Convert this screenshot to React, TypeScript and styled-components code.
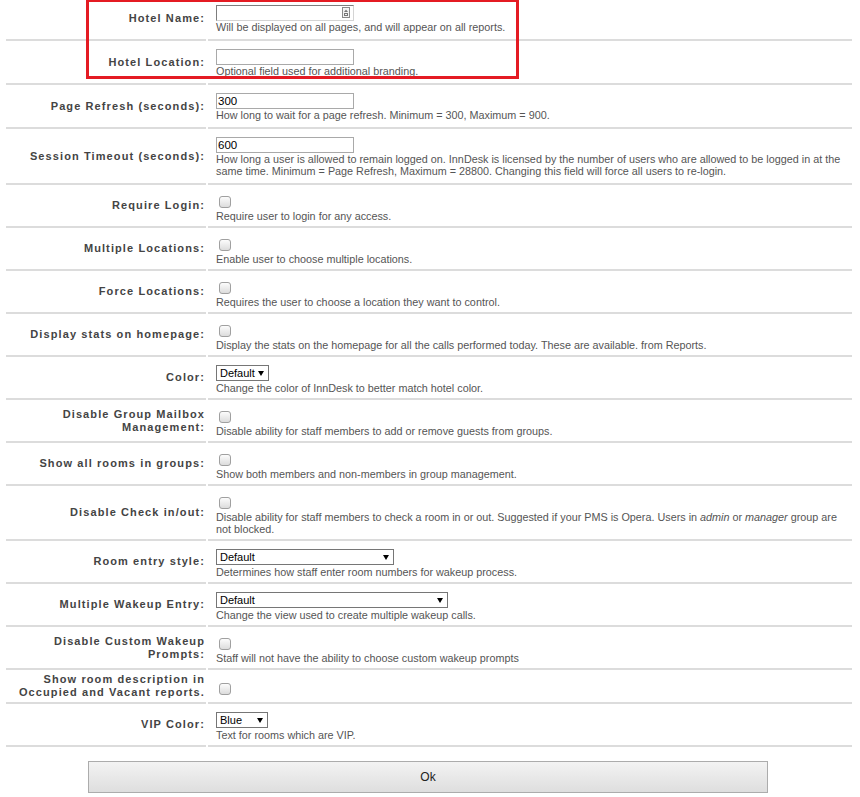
import React from 'react'
import styled, { createGlobalStyle } from 'styled-components'

type Kind = 'text' | 'check' | 'select'

interface Setting {
  label: string;
  kind: Kind;
  value?: string;
  width?: number;
  icon?: boolean;
  desc?: React.ReactNode;
}

const settings: Setting[] = [
  { label: 'Hotel Name:', kind: 'text', icon: true, desc: 'Will be displayed on all pages, and will appear on all reports.' },
  { label: 'Hotel Location:', kind: 'text', desc: 'Optional field used for additional branding.' },
  { label: 'Page Refresh (seconds):', kind: 'text', value: '300', desc: 'How long to wait for a page refresh. Minimum = 300, Maximum = 900.' },
  {
    label: 'Session Timeout (seconds):', kind: 'text', value: '600',
    desc: 'How long a user is allowed to remain logged on. InnDesk is licensed by the number of users who are allowed to be logged in at the same time. Minimum = Page Refresh, Maximum = 28800. Changing this field will force all users to re-login.'
  },
  { label: 'Require Login:', kind: 'check', desc: 'Require user to login for any access.' },
  { label: 'Multiple Locations:', kind: 'check', desc: 'Enable user to choose multiple locations.' },
  { label: 'Force Locations:', kind: 'check', desc: 'Requires the user to choose a location they want to control.' },
  { label: 'Display stats on homepage:', kind: 'check', desc: 'Display the stats on the homepage for all the calls performed today. These are available. from Reports.' },
  { label: 'Color:', kind: 'select', value: 'Default', width: 53, desc: 'Change the color of InnDesk to better match hotel color.' },
  { label: 'Disable Group Mailbox Management:', kind: 'check', desc: 'Disable ability for staff members to add or remove guests from groups.' },
  { label: 'Show all rooms in groups:', kind: 'check', desc: 'Show both members and non-members in group management.' },
  {
    label: 'Disable Check in/out:', kind: 'check',
    desc: <>Disable ability for staff members to check a room in or out. Suggested if your PMS is Opera. Users in <i>admin</i> or <i>manager</i> group are not blocked.</>
  },
  { label: 'Room entry style:', kind: 'select', value: 'Default', width: 178, desc: 'Determines how staff enter room numbers for wakeup process.' },
  { label: 'Multiple Wakeup Entry:', kind: 'select', value: 'Default', width: 232, desc: 'Change the view used to create multiple wakeup calls.' },
  { label: 'Disable Custom Wakeup Prompts:', kind: 'check', desc: 'Staff will not have the ability to choose custom wakeup prompts' },
  { label: 'Show room description in Occupied and Vacant reports.', kind: 'check' },
  { label: 'VIP Color:', kind: 'select', value: 'Blue', width: 52, desc: 'Text for rooms which are VIP.' },
]

const App = () => {
  return (
    <Page>
      <GlobalStyle />
      <Form>
        {settings.map((s) => (
          <Row key={s.label}>
            <Label>{s.label}</Label>
            <Value $kind={s.kind}>
              {s.kind === 'text' && (
                <Field>
                  <TextInput type="text" defaultValue={s.value ?? ''} $inset={!!s.icon} />
                  {s.icon && (
                    <KeyIcon width="8" height="11" viewBox="0 0 8 11">
                      <rect x="0.5" y="0.5" width="7" height="10" fill="#f4f4f4" stroke="#8a8a8a" />
                      <path d="M4 2.5 L6 5 L2 5 Z" fill="#777" />
                      <rect x="2.5" y="6.5" width="3" height="2" fill="none" stroke="#777" />
                    </KeyIcon>
                  )}
                </Field>
              )}
              {s.kind === 'check' && <Check type="checkbox" />}
              {s.kind === 'select' && (
                <SelectWrap style={{ width: s.width }}>
                  <Select defaultValue={s.value}>
                    <option>{s.value}</option>
                  </Select>
                </SelectWrap>
              )}
              {s.desc && <Desc>{s.desc}</Desc>}
            </Value>
          </Row>
        ))}
      </Form>
      <Actions>
        <OkButton type="button">Ok</OkButton>
      </Actions>
      <Highlight />
    </Page>
  )
}

const GlobalStyle = createGlobalStyle`
  html, body {
    margin: 0;
    padding: 0;
    background: #fff;
  }
  body {
    font-family: "Liberation Sans", Arial, sans-serif;
  }
`;

const Page = styled.div`
  position: relative;
  width: 860px;
  padding: 0 8px 0 6px;
  box-sizing: border-box;
`;

const Form = styled.div`
  margin-top: -3px;
  display: flex;
  flex-direction: column;
`;

const Row = styled.div`
  display: grid;
  grid-template-columns: 200px 1fr;
  column-gap: 2px;
  align-items: stretch;
`;

const Label = styled.div`
  display: flex;
  align-items: center;
  justify-content: flex-end;
  text-align: right;
  padding: 3px 1px 3px 8px;
  border-bottom: 2px solid #dcdcdc;
  font-size: 11px;
  line-height: 13px;
  font-weight: bold;
  letter-spacing: 1.1px;
  color: #444;
`;

const Value = styled.div<{ $kind: Kind }>`
  display: flex;
  flex-direction: column;
  justify-content: center;
  align-items: flex-start;
  padding: 8px 4px ${(p) => (p.$kind === 'text' ? 6 : 4)}px 8px;
  border-bottom: 2px solid #dcdcdc;
`;

const Field = styled.span`
  position: relative;
  display: inline-block;
`;

const TextInput = styled.input<{ $inset?: boolean }>`
  display: block;
  width: 138px;
  height: 16px;
  box-sizing: border-box;
  margin: 0;
  padding: 0 1px;
  border: 1px solid #a9a9a9;
  border-color: ${(p) => (p.$inset ? '#7d7d7d #d4d4d4 #d4d4d4 #7d7d7d' : '#a9a9a9')};
  border-radius: 0;
  font-family: "Liberation Sans", Arial, sans-serif;
  font-size: 11.5px;
  color: #000;
  outline: none;
`;

const KeyIcon = styled.svg`
  position: absolute;
  right: 4px;
  top: 2px;
`;

const Check = styled.input`
  appearance: none;
  display: block;
  width: 12px;
  height: 12px;
  margin: 3px 0 2px 3px;
  border: 1px solid #a0a0a0;
  border-radius: 3px;
  box-sizing: border-box;
  background: linear-gradient(#fcfcfc, #dcdcdc);
`;

const SelectWrap = styled.span`
  position: relative;
  display: inline-block;
  margin-bottom: 1px;
  &::after {
    content: "";
    position: absolute;
    right: 5px;
    top: 6px;
    border-left: 3px solid transparent;
    border-right: 3px solid transparent;
    border-top: 5px solid #000;
    pointer-events: none;
  }
`;

const Select = styled.select`
  appearance: none;
  display: block;
  width: 100%;
  height: 16px;
  box-sizing: border-box;
  margin: 0;
  padding: 0 0 0 3px;
  border: 1px solid #767676;
  border-radius: 0;
  background: #fff;
  font-family: "Liberation Sans", Arial, sans-serif;
  font-size: 11px;
  line-height: 14px;
  color: #000;
`;

const Desc = styled.div`
  font-size: 10.8px;
  line-height: 12px;
  color: #555;
`;

const Actions = styled.div`
  display: flex;
  justify-content: center;
  padding: 14px 0 4px;
`;

const OkButton = styled.button`
  width: 680px;
  height: 32px;
  margin-left: -2px;
  border: 1px solid #acacac;
  border-radius: 0;
  background: linear-gradient(#f3f3f3, #dedede);
  font-family: "Liberation Sans", Arial, sans-serif;
  font-size: 12px;
  color: #222;
`;

const Highlight = styled.div`
  position: absolute;
  left: 86px;
  top: 2px;
  width: 433px;
  height: 80px;
  box-sizing: border-box;
  border: 3px solid #e41b23;
  pointer-events: none;
`;

export default App;
